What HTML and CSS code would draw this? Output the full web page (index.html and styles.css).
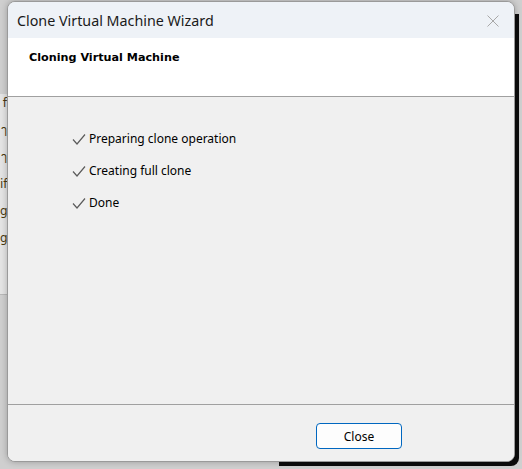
FILE: index.html
```html
<!DOCTYPE html>
<html>
<head>
<meta charset="utf-8">
<link rel="stylesheet" href="styles.css">
</head>
<body>
<div class="backwin"></div>
<div class="leftwin">
  <div class="frag">f</div>
  <div class="frag">ๅ</div>
  <div class="frag">ๅ</div>
  <div class="frag">if</div>
  <div class="frag">g</div>
  <div class="frag">g</div>
</div>
<div class="dialog">
  <div class="titlebar">
    <span class="title">Clone Virtual Machine Wizard</span>
    <svg class="xbtn" width="12" height="12" viewBox="0 0 12 12"><path d="M0.5 0.5L11.5 11.5M11.5 0.5L0.5 11.5" stroke="#a8a8a8" stroke-width="1" fill="none"/></svg>
  </div>
  <div class="header"><span class="htext">Cloning Virtual Machine</span></div>
  <div class="content">
    <ul class="steps">
      <li class="step"><svg class="check" width="14" height="13" viewBox="0 0 14 13"><path d="M1 6.5L5 11L13 1.5" stroke="#5c5c5c" stroke-width="1.2" fill="none"/></svg><span>Preparing clone operation</span></li>
      <li class="step"><svg class="check" width="14" height="13" viewBox="0 0 14 13"><path d="M1 6.5L5 11L13 1.5" stroke="#5c5c5c" stroke-width="1.2" fill="none"/></svg><span>Creating full clone</span></li>
      <li class="step"><svg class="check" width="14" height="13" viewBox="0 0 14 13"><path d="M1 6.5L5 11L13 1.5" stroke="#5c5c5c" stroke-width="1.2" fill="none"/></svg><span>Done</span></li>
    </ul>
  </div>
  <div class="footer"><button class="btn">Close</button></div>
</div>
</body>
</html>
```

FILE: styles.css
```css
html, body {
  margin: 0;
  padding: 0;
}
body {
  width: 522px;
  height: 469px;
  overflow: hidden;
  position: relative;
  background: #cfcfcf;
  font-family: "Noto Sans", "Open Sans", sans-serif;
}
.backwin {
  position: absolute;
  left: 279px;
  top: 14px;
  right: 3px;
  bottom: 3px;
  background: #0c0c0c;
  border-radius: 0 0 8px 0;
}
.leftwin {
  position: absolute;
  left: 0;
  top: 94px;
  width: 7px;
  padding-top: 2px;
  background: #e4e4e4;
  height: 198px;
  border-bottom: 1px solid #b8b8b8;
}
.frag {
  height: 27px;
  font-family: "DejaVu Sans", sans-serif;
  font-size: 12px;
  color: #4a3a10;
  text-align: right;
  line-height: 14px;
}
.dialog {
  position: absolute;
  left: 7px;
  top: 1px;
  width: 506px;
  height: 459px;
  border: 1px solid #9a9a9a;
  border-radius: 8px;
  overflow: hidden;
  display: flex;
  flex-direction: column;
  background: #f0f0f0;
  box-shadow: 0 0 6px rgba(0,0,0,0.25);
}
.titlebar {
  height: 36px;
  flex: none;
  background: #eef2f7;
  display: flex;
  align-items: center;
  justify-content: space-between;
  padding: 0 15px 0 9px;
}
.title {
  font-family: "Noto Sans", sans-serif;
  font-size: 14.3px;
  color: #1a1a1a;
}
.xbtn {
  display: block;
  margin-top: 1px;
}
.header {
  flex: none;
  background: #ffffff;
  border-bottom: 1px solid #a0a0a0;
  padding: 6px 0 0 21px;
  box-sizing: border-box;
  height: 59px;
}
.htext {
  font-family: "DejaVu Sans", sans-serif;
  font-weight: bold;
  font-size: 11.2px;
  color: #000;
}
.content {
  flex: 1;
  background: #f0f0f0;
  padding-top: 32px;
}
.steps {
  list-style: none;
  margin: 0;
  padding: 0 0 0 64px;
  display: flex;
  flex-direction: column;
  gap: 14px;
}
.step {
  display: flex;
  align-items: center;
  gap: 3px;
  height: 18px;
  font-family: "Noto Sans", sans-serif;
  font-size: 12px;
  color: #000;
}
.check {
  display: block;
  margin-top: 3px;
}
.footer {
  height: 57px;
  flex: none;
  border-top: 1px solid #a0a0a0;
  background: #f0f0f0;
  display: flex;
  justify-content: flex-end;
  padding: 18px 112px 0 0;
  box-sizing: border-box;
}
.btn {
  width: 86px;
  height: 26px;
  border: 1px solid #0067c0;
  border-radius: 4px;
  background: #fdfdfd;
  font-family: "Noto Sans", sans-serif;
  font-size: 12px;
  color: #000;
  padding: 0;
}
```
